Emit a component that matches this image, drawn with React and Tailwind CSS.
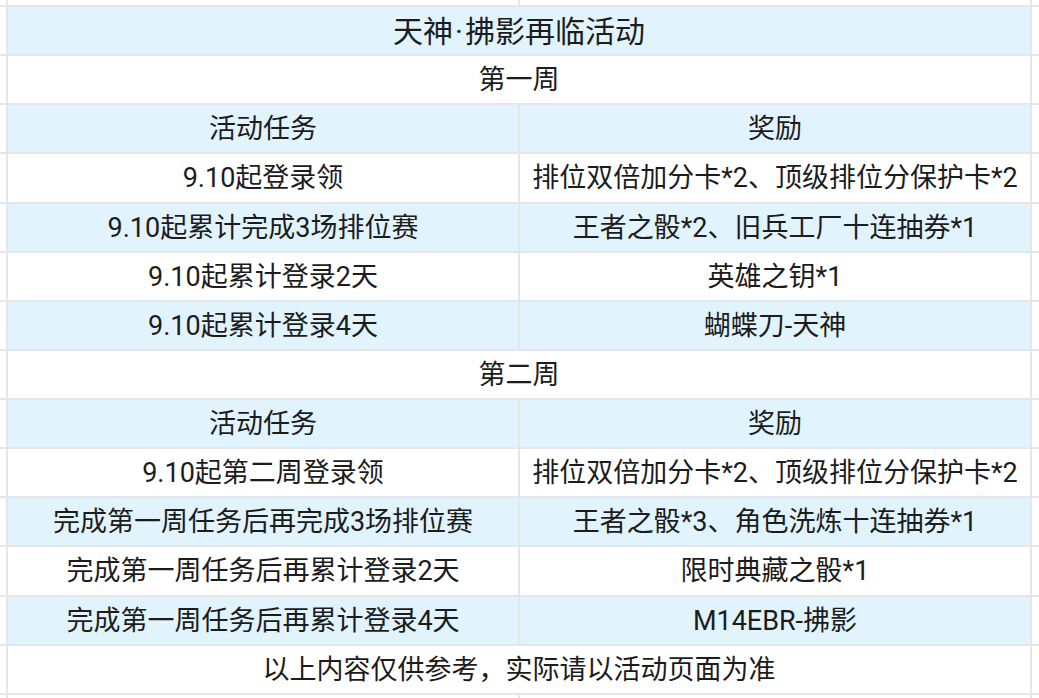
import React from "react";

const rows = [
  {
    span: (
      <span className="text-[30px]">
        天神<span style={{ fontFamily: "Roboto, sans-serif" }} className="mx-[2px]">·</span>拂影再临活动
      </span>
    ),
    blue: true,
  },
  { span: "第一周", blue: false },
  { a: "活动任务", b: "奖励", blue: true },
  { a: "9.10起登录领", b: "排位双倍加分卡*2、顶级排位分保护卡*2", blue: false },
  { a: "9.10起累计完成3场排位赛", b: "王者之骰*2、旧兵工厂十连抽券*1", blue: true },
  { a: "9.10起累计登录2天", b: "英雄之钥*1", blue: false },
  { a: "9.10起累计登录4天", b: "蝴蝶刀-天神", blue: true },
  { span: "第二周", blue: false },
  { a: "活动任务", b: "奖励", blue: true },
  { a: "9.10起第二周登录领", b: "排位双倍加分卡*2、顶级排位分保护卡*2", blue: false },
  { a: "完成第一周任务后再完成3场排位赛", b: "王者之骰*3、角色洗炼十连抽券*1", blue: true },
  { a: "完成第一周任务后再累计登录2天", b: "限时典藏之骰*1", blue: false },
  { a: "完成第一周任务后再累计登录4天", b: "M14EBR-拂影", blue: true },
  { span: "以上内容仅供参考，实际请以活动页面为准", blue: false },
];

function Cell({ children, blue, span }) {
  return (
    <div
      className={
        (blue ? "bg-[#e1f3fd] " : "bg-white ") +
        (span ? "col-span-2 " : "") +
        "flex items-center justify-center whitespace-nowrap overflow-hidden pt-[2px]"
      }
    >
      {children}
    </div>
  );
}

export default function App() {
  return (
    <div
      className="w-[1039px] h-[698px] overflow-hidden bg-[#e4e6ea] grid grid-cols-[6px_510px_510px_1fr] grid-rows-[5px_repeat(14,47.14px)_1fr] gap-[2px] text-[27px] leading-none text-[#1c1c1c]"
      style={{ fontFamily: 'Roboto, "Noto Sans CJK SC", sans-serif' }}
    >
      <div className="bg-white" />
      <div className="bg-white" />
      <div className="bg-white" />
      <div className="bg-white" />
      {rows.map((r, i) => (
        <React.Fragment key={i}>
          <div className="bg-white" />
          {r.span ? (
            <Cell blue={r.blue} span>
              {r.span}
            </Cell>
          ) : (
            <>
              <Cell blue={r.blue}>{r.a}</Cell>
              <Cell blue={r.blue}>{r.b}</Cell>
            </>
          )}
          <div className="bg-white" />
        </React.Fragment>
      ))}
      <div className="bg-white" />
      <div className="bg-white" />
      <div className="bg-white" />
      <div className="bg-white" />
    </div>
  );
}
